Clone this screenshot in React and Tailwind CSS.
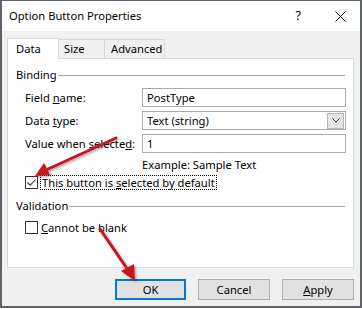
import React from "react";

const font = { fontFamily: '"Noto Sans", "Open Sans", sans-serif' };

function Check({ checked }) {
  return (
    <div className="w-[13px] h-[13px] border border-[#333333] bg-white flex items-center justify-center shrink-0">
      {checked && (
        <svg width="11" height="11" viewBox="0 0 11 11">
          <path d="M1.5 5.5 L4.2 8.2 L9.5 2.5" fill="none" stroke="#333" strokeWidth="1.1" />
        </svg>
      )}
    </div>
  );
}

function Group({ title }) {
  return (
    <div className="flex items-center h-[16px] pr-[8px]">
      <span className="text-black">{title}</span>
      <div className="flex-1 h-px bg-[#a8a8a8] ml-[1px]" />
    </div>
  );
}

function Row({ label, children }) {
  return (
    <div className="flex items-center h-[19px]">
      <div className="w-[126px] pl-[9px] whitespace-nowrap">{label}</div>
      {children}
    </div>
  );
}

export default function App() {
  return (
    <div className="w-[362px] h-[309px] bg-white relative overflow-hidden text-[11.2px] leading-none text-black" style={font}>
      <div className="w-[362px] h-[308px] border-t border-l-2 border-r-2 border-b-2 border-[#5c636b] bg-[#f0f0f0] flex flex-col">
        {/* title bar */}
        <div className="h-[30px] bg-white flex items-center pl-[7px] pr-[14px] shrink-0">
          <span className="flex-1 text-[11.2px]">Option Button Properties</span>
          <span className="text-[12.5px] mr-[34px]">?</span>
          <svg width="11" height="11" viewBox="0 0 11 11">
            <path d="M0.5 0.5 L10.5 10.5 M10.5 0.5 L0.5 10.5" stroke="#111" strokeWidth="1" />
          </svg>
        </div>
        {/* tabs */}
        <div className="flex items-end pl-[5px] mt-[7px] h-[21px] relative z-10">
          <div className="w-[52px] h-[21px] bg-white border border-b-0 border-[#d9d9d9] flex items-center pl-[8px] pb-[1px]">Data</div>
          <div className="w-[46px] h-[19px] border-t border-r border-[#d9d9d9] bg-[#f0f0f0] flex items-center pl-[5px] mb-px">Size</div>
          <div className="w-[60px] h-[19px] border-t border-r border-[#d9d9d9] bg-[#f0f0f0] flex items-center pl-[6px] mb-px">Advanced</div>
        </div>
        {/* panel */}
        <div className="ml-[5px] mr-[6px] -mt-px h-[210px] bg-white border border-[#d9d9d9] flex flex-col pl-[8px] pt-[8px]">
          <Group title="Binding" />
          <div className="flex flex-col gap-[4px] mt-[5px]">
            <Row label={<span>Field <u>n</u>ame:</span>}>
              <div className="w-[204px] h-[19px] border border-[#a9a9a9] flex items-center pl-[4px]">PostType</div>
            </Row>
            <Row label={<span>Data <u>t</u>ype:</span>}>
              <div className="w-[204px] h-[19px] border border-[#a9a9a9] flex items-center pl-[4px]">
                <span className="flex-1">Text (string)</span>
                <div className="w-[17px] h-[16px] mr-px bg-[#e5e5e5] border border-[#b5b5b5] flex items-center justify-center">
                  <svg width="8" height="5" viewBox="0 0 8 5">
                    <path d="M0.5 0.5 L4 4 L7.5 0.5" fill="none" stroke="#333" strokeWidth="1" />
                  </svg>
                </div>
              </div>
            </Row>
            <Row label={<span>Value when selecte<u>d</u>:</span>}>
              <div className="w-[204px] h-[19px] border border-[#a9a9a9] flex items-center pl-[4px]">1</div>
            </Row>
          </div>
          <div className="pl-[126px] mt-[5px] h-[14px] flex items-center">Example: Sample Text</div>
          <div className="flex items-center pl-[9px] mt-[3px] h-[15px]">
            <Check checked />
            <div className="ml-[2px] h-[15px] px-[1px] border border-dotted border-black flex items-center">
              <span>This button is <u>s</u>elected by default</span>
            </div>
          </div>
          <div className="mt-[8px]">
            <Group title="Validation" />
          </div>
          <div className="flex items-center pl-[9px] mt-[6px] h-[15px]">
            <Check />
            <div className="ml-[3px]"><span><u>C</u>annot be blank</span></div>
          </div>
        </div>
        {/* buttons */}
        <div className="flex justify-end gap-[12px] pr-[6px] mt-[11px]">
          <div className="w-[71px] h-[21px] bg-[#e1e1e1] border-2 border-[#0078d7] flex items-center justify-center">OK</div>
          <div className="w-[72px] h-[21px] bg-[#e1e1e1] border border-[#adadad] flex items-center justify-center">Cancel</div>
          <div className="w-[72px] h-[21px] bg-[#e1e1e1] border border-[#adadad] flex items-center justify-center"><span><u>A</u>pply</span></div>
        </div>
      </div>
      {/* red arrows overlay */}
      <svg className="absolute left-0 top-0 pointer-events-none" width="362" height="309" viewBox="0 0 362 309">
        <defs>
          <filter id="sh" x="-20%" y="-20%" width="140%" height="140%">
            <feDropShadow dx="1.5" dy="1.5" stdDeviation="1.2" floodColor="#000" floodOpacity="0.35" />
          </filter>
        </defs>
        <g filter="url(#sh)" fill="#c8141c" stroke="#c8141c">
          <line x1="116" y1="138" x2="46" y2="170" strokeWidth="3" strokeLinecap="round" />
          <polygon points="35,176 44,163 50,175" stroke="none" />
          <line x1="100" y1="229" x2="128" y2="270" strokeWidth="3" strokeLinecap="round" />
          <polygon points="135,281 121,271 134,264" stroke="none" />
        </g>
      </svg>
    </div>
  );
}
